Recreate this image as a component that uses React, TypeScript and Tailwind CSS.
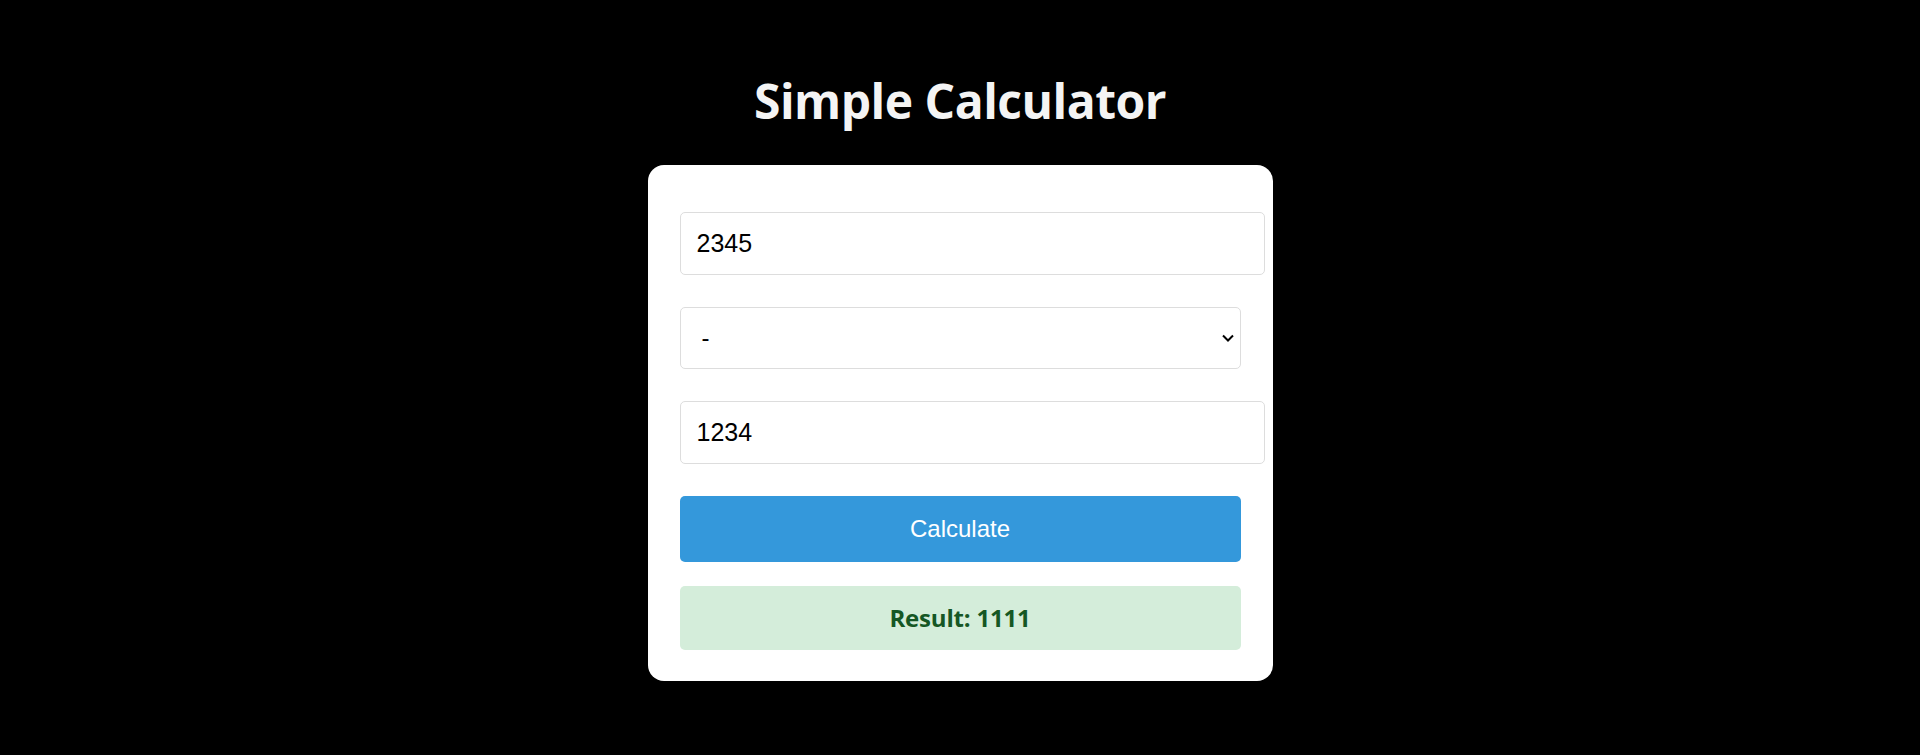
import { useState } from 'react';

const arial = 'font-["Liberation_Sans",Arial,sans-serif]';

export default function App() {
  const [a, setA] = useState('2345');
  const [op, setOp] = useState('-');
  const [b, setB] = useState('1234');
  const [result, setResult] = useState<number | null>(1111);

  const calculate = () => {
    const x = parseFloat(a);
    const y = parseFloat(b);
    if (isNaN(x) || isNaN(y)) return;
    let r = 0;
    if (op === '+') r = x + y;
    else if (op === '-') r = x - y;
    else if (op === '*') r = x * y;
    else r = y === 0 ? NaN : x / y;
    setResult(r);
  };

  return (
    <div className='min-h-[755px] bg-black flex flex-col items-center pt-[68px] font-["Open_Sans",sans-serif]'>
      {/* Title */}
      <h1 className="text-[48px] leading-[65px] font-bold tracking-[-0.5px] text-[#f4f4f4] mb-[32px]">
        Simple Calculator
      </h1>

      {/* Card */}
      <div className="w-[625px] bg-white rounded-2xl px-8 pt-[47px] pb-[31px] flex flex-col">
        <input
          type="number"
          value={a}
          onChange={(e) => setA(e.target.value)}
          className={`${arial} box-border w-[585px] h-[63px] border border-[#ddd] rounded-[5px] px-4 text-[25px] text-black outline-none`}
        />

        <div className="relative mt-8">
          <select
            value={op}
            onChange={(e) => setOp(e.target.value)}
            className={`${arial} appearance-none box-border w-full h-[62px] border border-[#ddd] rounded-[5px] pl-[21px] pr-8 text-[24px] text-black bg-white outline-none`}
          >
            <option value="+">+</option>
            <option value="-">-</option>
            <option value="*">*</option>
            <option value="/">/</option>
          </select>
          <svg
            className="absolute right-[7px] top-1/2 -translate-y-1/2 pointer-events-none"
            width="12"
            height="8"
            viewBox="0 0 12 8"
            fill="none"
          >
            <polyline points="1,1.5 6,6.5 11,1.5" stroke="#000" strokeWidth="2" />
          </svg>
        </div>

        <input
          type="number"
          value={b}
          onChange={(e) => setB(e.target.value)}
          className={`${arial} mt-8 box-border w-[585px] h-[63px] border border-[#ddd] rounded-[5px] px-4 text-[25px] text-black outline-none`}
        />

        <button
          onClick={calculate}
          className={`${arial} mt-8 h-[66px] w-full rounded-[5px] bg-[#3498db] text-white text-[24px] cursor-pointer`}
        >
          Calculate
        </button>

        {result !== null && (
          <div className="mt-6 h-[64px] rounded-[5px] bg-[#d4edda] text-[#155724] text-[24px] font-bold tracking-[-0.2px] flex items-center justify-center">
            Result: {result}
          </div>
        )}
      </div>
    </div>
  );
}
